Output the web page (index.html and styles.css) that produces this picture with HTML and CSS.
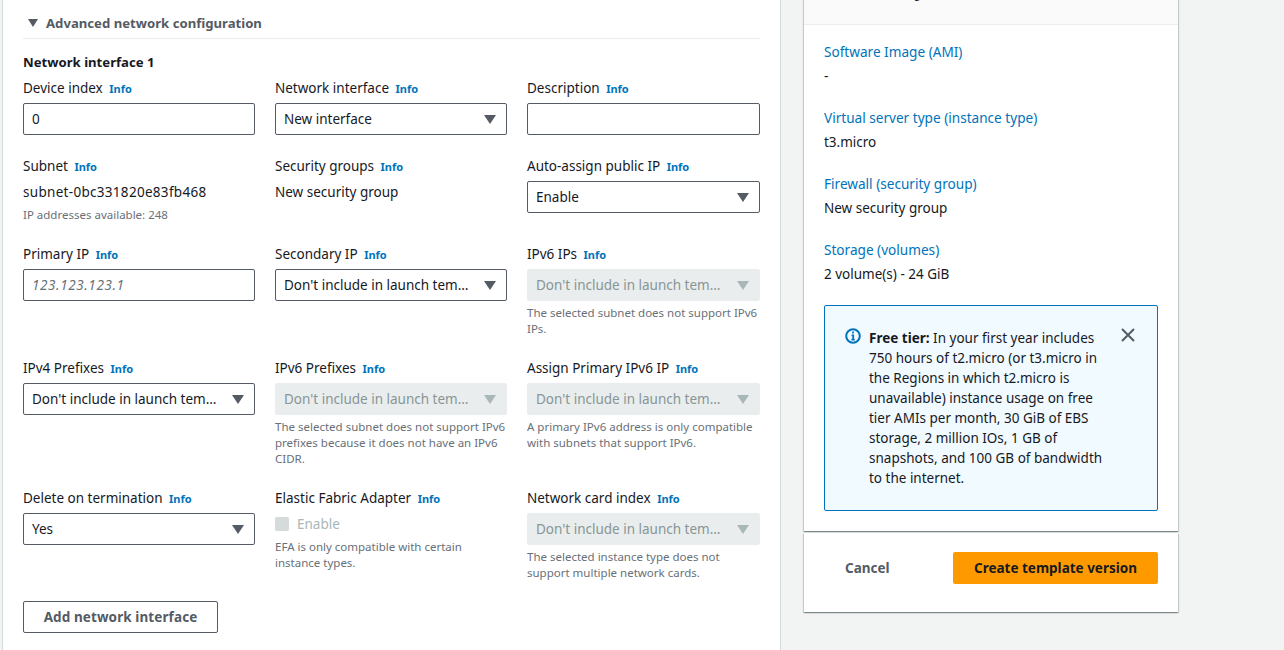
FILE: index.html
```html
<!DOCTYPE html>
<html lang="en">
<head>
  <meta charset="UTF-8" />
  <title>Create template version</title>
  <link rel="stylesheet" href="styles.css">
</head>
<body>
  <div class="page">
    <main class="panel">
      <div class="expander">
        <svg class="caret" viewBox="0 0 12 10" width="12" height="10"><path d="M1 1h10L6 9z"/></svg>
        <span>Advanced network configuration</span>
      </div>

      <h3 class="nic-title">Network interface 1</h3>

      <div class="form-row row-a">
        <div class="field">
          <label>Device index <a class="info">Info</a></label>
          <input class="text-input" value="0">
        </div>
        <div class="field">
          <label>Network interface <a class="info">Info</a></label>
          <div class="select"><span>New interface</span><i class="arrow"></i></div>
        </div>
        <div class="field">
          <label>Description <a class="info">Info</a></label>
          <input class="text-input">
        </div>
      </div>

      <div class="form-row row-b">
        <div class="field">
          <label>Subnet <a class="info">Info</a></label>
          <div class="value subnet-id">subnet-0bc331820e83fb468</div>
          <div class="hint hint-tight">IP addresses available: 248</div>
        </div>
        <div class="field">
          <label>Security groups <a class="info">Info</a></label>
          <div class="value">New security group</div>
        </div>
        <div class="field">
          <label>Auto-assign public IP <a class="info">Info</a></label>
          <div class="select"><span>Enable</span><i class="arrow"></i></div>
        </div>
      </div>

      <div class="form-row row-c">
        <div class="field">
          <label>Primary IP <a class="info">Info</a></label>
          <input class="text-input" placeholder="123.123.123.1">
        </div>
        <div class="field">
          <label>Secondary IP <a class="info">Info</a></label>
          <div class="select"><span>Don't include in launch template</span><i class="arrow"></i></div>
        </div>
        <div class="field">
          <label>IPv6 IPs <a class="info">Info</a></label>
          <div class="select disabled"><span>Don't include in launch template</span><i class="arrow"></i></div>
          <div class="hint">The selected subnet does not support IPv6 IPs.</div>
        </div>
      </div>

      <div class="form-row row-d">
        <div class="field">
          <label>IPv4 Prefixes <a class="info">Info</a></label>
          <div class="select"><span>Don't include in launch template</span><i class="arrow"></i></div>
        </div>
        <div class="field">
          <label>IPv6 Prefixes <a class="info">Info</a></label>
          <div class="select disabled"><span>Don't include in launch template</span><i class="arrow"></i></div>
          <div class="hint">The selected subnet does not support IPv6 prefixes because it does not have an IPv6 CIDR.</div>
        </div>
        <div class="field">
          <label>Assign Primary IPv6 IP <a class="info">Info</a></label>
          <div class="select disabled"><span>Don't include in launch template</span><i class="arrow"></i></div>
          <div class="hint">A primary IPv6 address is only compatible with subnets that support IPv6.</div>
        </div>
      </div>

      <div class="form-row row-e">
        <div class="field">
          <label>Delete on termination <a class="info">Info</a></label>
          <div class="select"><span>Yes</span><i class="arrow"></i></div>
        </div>
        <div class="field">
          <label>Elastic Fabric Adapter <a class="info">Info</a></label>
          <div class="checkbox"><i class="box"></i><span>Enable</span></div>
          <div class="hint hint-check">EFA is only compatible with certain instance types.</div>
        </div>
        <div class="field">
          <label>Network card index <a class="info">Info</a></label>
          <div class="select disabled"><span>Don't include in launch template</span><i class="arrow"></i></div>
          <div class="hint">The selected instance type does not support multiple network cards.</div>
        </div>
      </div>

      <button class="btn-add">Add network interface</button>
    </main>

    <aside class="side">
      <section class="card summary">
        <h2 class="card-head">Summary</h2>
        <div class="card-body">
          <div class="item"><a>Software Image (AMI)</a><p>-</p></div>
          <div class="item"><a>Virtual server type (instance type)</a><p>t3.micro</p></div>
          <div class="item"><a>Firewall (security group)</a><p>New security group</p></div>
          <div class="item"><a>Storage (volumes)</a><p>2 volume(s) - 24 GiB</p></div>
          <div class="notice">
            <svg class="notice-icon" viewBox="0 0 16 16" width="16" height="16">
              <circle cx="8" cy="8" r="6.8" fill="none" stroke="#0073bb" stroke-width="2"/>
              <path d="M8 3.6v2M6.6 7.4H8.2V11.6M6.4 11.6h3.4" fill="none" stroke="#0073bb" stroke-width="1.7"/>
            </svg>
            <p><b>Free tier:</b> In your first year includes 750 hours of t2.micro (or t3.micro in the Regions in which t2.micro is unavailable) instance usage on free tier AMIs per month, 30 GiB of EBS storage, 2 million IOs, 1 GB of snapshots, and 100 GB of bandwidth to the internet.</p>
            <svg class="notice-close" viewBox="0 0 14 14" width="14" height="14"><path d="M1 1l12 12M13 1L1 13" fill="none" stroke="#545b64" stroke-width="2"/></svg>
          </div>
        </div>
      </section>
      <section class="card actions">
        <button class="btn-cancel">Cancel</button>
        <button class="btn-primary">Create template version</button>
      </section>
    </aside>
  </div>
</body>
</html>
```

FILE: styles.css
```css
html, body {
  margin: 0;
  height: 650px;
  overflow: hidden;
}
body {
  font-family: "Noto Sans", Arial, sans-serif;
  font-size: 13.5px;
  line-height: 20px;
  color: #16191f;
  background-color: #f2f3f3;
}
a {
  color: #0073bb;
}
p {
  margin: 0;
}
.page {
  display: flex;
  align-items: flex-start;
}
.panel {
  box-sizing: border-box;
  width: 779px;
  height: 650px;
  margin-left: 2px;
  padding: 13px 20px 0 20px;
  background-color: #fff;
  border-left: 1px solid #d5dbdb;
  border-right: 1px solid #d5dbdb;
}
.expander {
  display: flex;
  align-items: center;
  gap: 7px;
  height: 20px;
  padding: 0 0 5px 4px;
  border-bottom: 1px solid #eaeded;
  font-size: 13.15px;
  font-weight: 700;
  color: #545b64;
}
.caret {
  fill: #545b64;
}
.nic-title {
  margin: 13px 0 6px;
  font-size: 13.15px;
  line-height: 20px;
  font-weight: 700;
}
.form-row {
  display: grid;
  grid-template-columns: 232px 232px minmax(0, 1fr);
  gap: 20px;
}
.row-b,
.row-c,
.row-d,
.row-e {
  margin-top: 21px;
}
label {
  display: block;
  height: 20px;
  margin-bottom: 5px;
}
.info {
  margin-left: 3px;
  font-size: 11px;
  font-weight: 700;
}
.text-input,
.select {
  box-sizing: border-box;
  display: flex;
  align-items: center;
  width: 100%;
  height: 32px;
  padding: 0 8px;
  font: inherit;
  color: #16191f;
  background-color: #fff;
  border: 1px solid #545b64;
  border-radius: 2px;
}
.text-input::placeholder {
  font-style: italic;
  letter-spacing: .6px;
  color: #687078;
  opacity: 1;
}
.select {
  gap: 9px;
}
.select span {
  flex: 1;
  min-width: 0;
  overflow: hidden;
  white-space: nowrap;
  text-overflow: ellipsis;
}
.arrow {
  flex: none;
  width: 0;
  height: 0;
  margin-right: 2px;
  border-left: 6px solid transparent;
  border-right: 6px solid transparent;
  border-top: 9px solid #545b64;
}
.select.disabled {
  color: #879596;
  background-color: #eaeded;
  border-color: #eaeded;
}
.select.disabled .arrow {
  border-top-color: #aab7b8;
}
.value {
  margin-top: 6px;
}
.subnet-id {
  letter-spacing: .3px;
}
.hint {
  margin-top: 4px;
  font-size: 11.5px;
  line-height: 16px;
  color: #687078;
}
.hint-tight {
  margin-top: 5px;
}
.hint-check {
  margin-top: 5px;
}
.checkbox {
  display: flex;
  align-items: center;
  gap: 8px;
  margin-top: 6px;
  color: #aab7b8;
}
.box {
  width: 14px;
  height: 14px;
  background-color: #d5dbdb;
  border-radius: 2px;
}
.btn-add {
  display: block;
  width: 195px;
  height: 32px;
  margin-top: 20px;
  padding: 0;
  font: inherit;
  font-weight: 700;
  letter-spacing: .1px;
  color: #545b64;
  background-color: #fff;
  border: 1px solid #545b64;
  border-radius: 2px;
}
.side {
  width: 374px;
  margin-left: 23px;
}
.card {
  background-color: #fff;
  box-shadow: 0 1px 1px 0 rgba(0, 28, 36, .3), 1px 1px 1px 0 rgba(0, 28, 36, .15), -1px 1px 1px 0 rgba(0, 28, 36, .15);
}
.summary {
  margin-top: -30px;
}
.card-head {
  box-sizing: border-box;
  height: 55px;
  margin: 0;
  padding: 8px 20px 0 35px;
  font-size: 18px;
  line-height: 24px;
  background-color: #fafafa;
  border-bottom: 1px solid #eaeded;
}
.card-body {
  box-sizing: border-box;
  height: 506px;
  padding: 17px 20px 0;
}
.item {
  height: 66px;
}
.item a {
  font-size: 13.6px;
}
.item p {
  margin-top: 4px;
}
.notice {
  display: flex;
  align-items: flex-start;
  box-sizing: border-box;
  height: 206px;
  margin-top: -1px;
  padding: 22px 20px 0;
  background-color: #f1faff;
  border: 1px solid #0073bb;
  border-radius: 2px;
}
.notice-icon {
  flex: none;
  margin-right: 8px;
}
.notice p {
  flex: 1;
}
.notice-close {
  flex: none;
  margin: 0 2px 0 10px;
}
.actions {
  display: flex;
  align-items: flex-start;
  justify-content: space-between;
  box-sizing: border-box;
  height: 79px;
  margin-top: 2px;
  padding: 19px 20px 0;
}
.btn-cancel {
  height: 32px;
  margin-left: 21px;
  padding: 0;
  font: inherit;
  font-weight: 700;
  color: #545b64;
  background: none;
  border: 0;
}
.btn-primary {
  width: 205px;
  height: 32px;
  padding: 0;
  font: inherit;
  font-weight: 700;
  color: #16191f;
  background-color: #ff9900;
  border: 0;
  border-radius: 2px;
}
```
